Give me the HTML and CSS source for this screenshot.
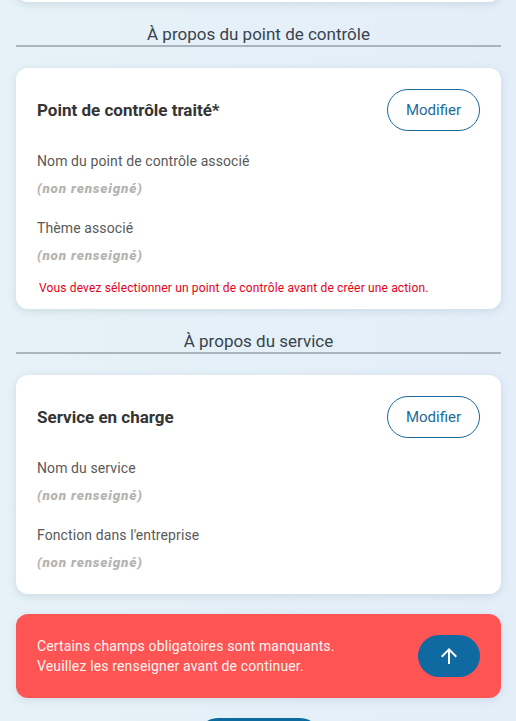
FILE: index.html
```html
<!DOCTYPE html>
<html lang="fr">
<head>
<meta charset="utf-8">
<title>Action</title>
<link rel="stylesheet" href="styles.css">
</head>
<body>
<div class="page">
  <div class="card card-prev"></div>

  <h2 class="section-title">À propos du point de contrôle</h2>
  <div class="card card-error">
    <div class="card-head">
      <h3 class="card-title">Point de contrôle traité*</h3>
      <button class="btn-outline">Modifier</button>
    </div>
    <div class="field">
      <div class="label">Nom du point de contrôle associé</div>
      <div class="value">(non renseigné)</div>
    </div>
    <div class="field">
      <div class="label">Thème associé</div>
      <div class="value">(non renseigné)</div>
    </div>
    <p class="error">Vous devez sélectionner un point de contrôle avant de créer une action.</p>
  </div>

  <h2 class="section-title">À propos du service</h2>
  <div class="card">
    <div class="card-head">
      <h3 class="card-title">Service en charge</h3>
      <button class="btn-outline">Modifier</button>
    </div>
    <div class="field">
      <div class="label">Nom du service</div>
      <div class="value">(non renseigné)</div>
    </div>
    <div class="field">
      <div class="label">Fonction dans l'entreprise</div>
      <div class="value">(non renseigné)</div>
    </div>
  </div>

  <div class="alert">
    <p class="alert-text">Certains champs obligatoires sont manquants.<br>Veuillez les renseigner avant de continuer.</p>
    <button class="btn-up" aria-label="Remonter">
      <svg width="24" height="24" viewBox="0 0 24 24"><path fill="#fff" d="M4 12l1.41 1.41L11 7.83V20h2V7.83l5.58 5.59L20 12l-8-8-8 8z"/></svg>
    </button>
  </div>

  <div class="bottom-row">
    <button class="btn-primary" aria-label="Créer l'action"></button>
  </div>
</div>
</body>
</html>
```

FILE: styles.css
```css
* { box-sizing: border-box; }

html, body {
  margin: 0;
  padding: 0;
}

body {
  background: linear-gradient(to right, #e6f2f7, #e3eef9);
  font-family: Roboto, "Noto Sans", "Liberation Sans", sans-serif;
  height: 721px;
  overflow: hidden;
}

.page {
  padding: 0 15px 0 16px;
  display: flex;
  flex-direction: column;
}

.card {
  background: #fff;
  border-radius: 12px;
  box-shadow: 0 2px 8px rgba(60, 80, 100, 0.14);
  padding: 21px 21px 22px;
}

.card-prev {
  height: 40px;
  margin-top: -38px;
  padding: 0;
}

.section-title {
  margin: 22px 0 21px;
  font-size: 17px;
  font-weight: 400;
  line-height: 20px;
  color: #39434d;
  text-align: center;
  padding-bottom: 1px;
  border-bottom: 2px solid #aab4bd;
}

.card-error {
  padding-bottom: 13px;
}

.card-head {
  display: flex;
  align-items: center;
  justify-content: space-between;
}

.card-title {
  margin: 0;
  font-size: 17px;
  font-weight: 700;
  line-height: 20px;
  color: #343434;
}

.btn-outline {
  height: 42px;
  width: 93px;
  padding: 0;
  border: 1px solid #1b6b9b;
  border-radius: 21px;
  background: #fff;
  color: #1b6b9b;
  font-family: inherit;
  font-size: 15px;
}

.field {
  margin-top: 20px;
  display: flex;
  flex-direction: column;
  gap: 7px;
}

.label {
  font-size: 14px;
  letter-spacing: 0.1px;
  line-height: 20px;
  color: #595959;
}

.value {
  font-size: 13.5px;
  line-height: 20px;
  font-style: italic;
  font-weight: 900;
  letter-spacing: 0.8px;
  color: #b4b4b4;
}

.error {
  margin: 15px 0 0 2px;
  font-size: 12px;
  letter-spacing: 0.15px;
  line-height: 16px;
  color: #e3001b;
}

.alert {
  margin-top: 20px;
  background: #fe5454;
  border-radius: 12px;
  padding: 21px;
  display: flex;
  align-items: center;
  justify-content: space-between;
  box-shadow: 0 2px 8px rgba(60, 80, 100, 0.12);
}

.alert-text {
  margin: 0;
  font-size: 14px;
  letter-spacing: 0.15px;
  line-height: 20px;
  color: #fff5f0;
}

.btn-up {
  width: 62px;
  height: 42px;
  border: none;
  border-radius: 21px;
  background: #0e6aa1;
  display: flex;
  align-items: center;
  justify-content: center;
  padding: 0;
}

.bottom-row {
  margin-top: 20px;
  display: flex;
  justify-content: center;
}

.btn-primary {
  width: 124px;
  height: 42px;
  margin-left: 1px;
  border: none;
  border-radius: 21px;
  background: #0d6a9f;
}
```
